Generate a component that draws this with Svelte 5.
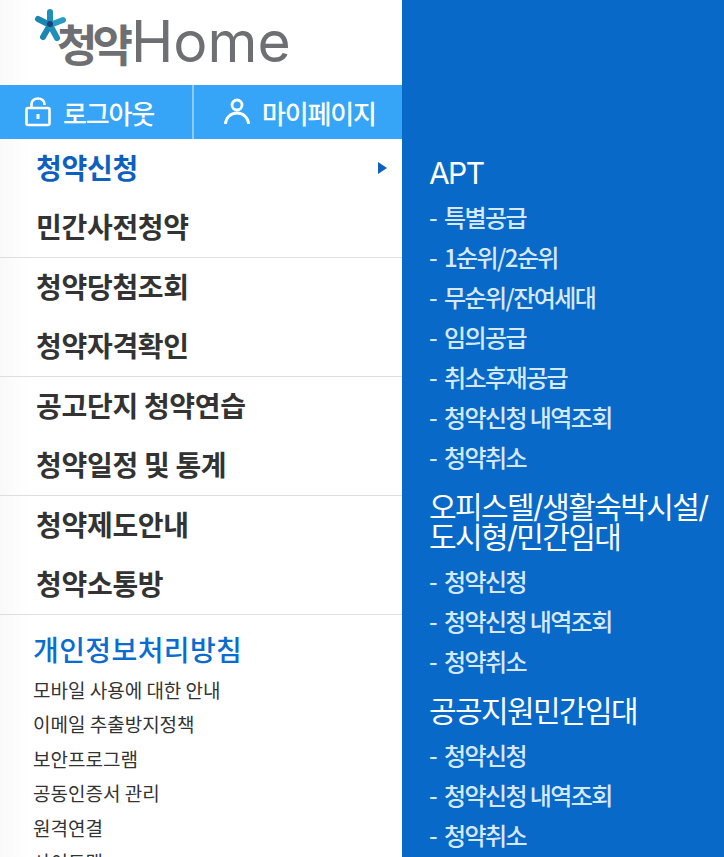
<script>
	const menuGroups = [
		[{ label: '청약신청', active: true }, { label: '민간사전청약' }],
		[{ label: '청약당첨조회' }, { label: '청약자격확인' }],
		[{ label: '공고단지 청약연습' }, { label: '청약일정 및 통계' }],
		[{ label: '청약제도안내' }, { label: '청약소통방' }]
	];

	const footerLinks = ['모바일 사용에 대한 안내', '이메일 추출방지정책', '보안프로그램', '공동인증서 관리', '원격연결', '사이트맵'];

	const subMenus = [
		{ title: ['APT'], items: ['특별공급', '1순위/2순위', '무순위/잔여세대', '임의공급', '취소후재공급', '청약신청 내역조회', '청약취소'] },
		{ title: ['오피스텔/생활숙박시설/', '도시형/민간임대'], items: ['청약신청', '청약신청 내역조회', '청약취소'] },
		{ title: ['공공지원민간임대'], items: ['청약신청', '청약신청 내역조회', '청약취소'] }
	];
</script>

<div class="page">
	<aside class="sidebar">
		<header class="logo">
			<span class="logo-ko">청약</span><span class="logo-en">Home</span>
			<svg class="star" viewBox="0 0 32 36" width="32" height="36" aria-hidden="true">
				<g fill="none" stroke-linecap="round" stroke-width="6">
					<path d="M16 17 L16 4" stroke="#1f8fb8" />
					<path d="M16 17 L4 11" stroke="#1b86b4" />
					<path d="M16 17 L29 12" stroke="#2a9cc4" />
					<path d="M16 17 L9 29" stroke="#1b86b4" />
					<path d="M16 17 L23 30" stroke="#1f8fb8" />
				</g>
				<circle cx="16" cy="16" r="3" fill="#1c3f7c" />
			</svg>
		</header>

		<div class="auth">
			<a class="auth-btn logout" href="#logout">
				<svg viewBox="0 0 26 30" width="26" height="30" fill="none" stroke="#fff" stroke-width="2.6" aria-hidden="true">
					<rect x="1.5" y="11" width="23" height="17" rx="1.5" />
					<path d="M6.5 11 V7 a6.5 5.5 0 0 1 13 0 V8" />
					<path d="M13 17 v5" stroke-width="3" />
				</svg>
				<span>로그아웃</span>
			</a>
			<a class="auth-btn mypage" href="#mypage">
				<svg viewBox="0 0 26 28" width="26" height="28" fill="none" stroke="#fff" stroke-width="2.8" aria-hidden="true">
					<circle cx="13" cy="7" r="5" />
					<path d="M1.5 26 a11.5 11 0 0 1 23 0" />
				</svg>
				<span>마이페이지</span>
			</a>
		</div>

		<nav>
			{#each menuGroups as group}
				<ul class="menu-group">
					{#each group as item}
						<li class="menu-item" class:active={item.active}>
							{item.label}
							{#if item.active}<span class="arrow"></span>{/if}
						</li>
					{/each}
				</ul>
			{/each}
		</nav>

		<div class="footer">
			<h2 class="privacy">개인정보처리방침</h2>
			<ul>
				{#each footerLinks as link}
					<li>{link}</li>
				{/each}
			</ul>
		</div>
	</aside>

	<section class="panel">
		{#each subMenus as sub}
			<h3 class="sub-title">
				{#each sub.title as line}
					<span>{line}</span>
				{/each}
			</h3>
			<ul class="sub-list">
				{#each sub.items as item}
					<li><span class="dash">-</span>{item}</li>
				{/each}
			</ul>
		{/each}
	</section>
</div>

<style>
	:global(body) {
		margin: 0;
		overflow: hidden;
	}

	.page {
		display: flex;
		width: 724px;
		height: 857px;
		overflow: hidden;
		font-family: "Noto Sans CJK KR", "Noto Sans", sans-serif;
	}

	ul {
		list-style: none;
		margin: 0;
		padding: 0;
	}

	.sidebar {
		width: 402px;
		flex-shrink: 0;
		background: linear-gradient(90deg, #f9f9f9, #fff 30px);
		color: #333;
	}

	.logo {
		position: relative;
		display: flex;
		align-items: baseline;
		height: 85px;
		padding-left: 57px;
		box-sizing: border-box;
		color: #6e6f73;
	}

	.star {
		position: absolute;
		left: 34px;
		top: 8px;
	}

	.logo-ko {
		font-size: 44px;
		font-weight: 700;
		line-height: 84px;
		letter-spacing: -5px;
	}

	.logo-en {
		margin-left: 3px;
		font-family: Inter, sans-serif;
		font-size: 57px;
		font-weight: 400;
		line-height: 84px;
	}

	.auth {
		display: flex;
		height: 54px;
		background: #36a5f7;
	}

	.auth-btn {
		display: flex;
		align-items: center;
		gap: 12px;
		color: #fff;
		font-size: 26px;
		font-weight: 500;
		letter-spacing: -1.2px;
		text-decoration: none;
	}

	.logout {
		flex: 0 0 194px;
		box-sizing: border-box;
		padding-left: 25px;
		border-right: 2px solid #8ccbf9;
	}

	.mypage {
		flex: 1;
		padding-left: 30px;
	}

	.menu-group {
		border-bottom: 1px solid #dedede;
	}

	.menu-item {
		position: relative;
		height: 59px;
		line-height: 57px;
		padding-left: 36px;
		font-size: 28px;
		font-weight: 700;
		letter-spacing: -0.3px;
	}

	.menu-item.active {
		color: #0d5fc0;
	}

	.arrow {
		position: absolute;
		right: 15px;
		top: 23px;
		border-left: 9px solid #0d5fc0;
		border-top: 6px solid transparent;
		border-bottom: 6px solid transparent;
	}

	.footer {
		padding: 15px 0 0 33px;
	}

	.privacy {
		margin: 0 0 5px;
		color: #0a6cd0;
		font-size: 28px;
		font-weight: 500;
		line-height: 38px;
		letter-spacing: 0.4px;
	}

	.footer li {
		height: 34.4px;
		line-height: 34px;
		font-size: 19px;
	}

	.panel {
		flex: 1;
		background: #0869c9;
		padding-top: 152px;
		padding-left: 27px;
		color: #fff;
	}

	.sub-title {
		margin: 0 0 9px;
		display: flex;
		flex-direction: column;
		font-family: Inter, "Noto Sans CJK KR", sans-serif;
		font-size: 30px;
		font-weight: 400;
		line-height: 30px;
		letter-spacing: -1.6px;
	}

	.sub-title:first-of-type {
		padding-top: 6px;
	}

	.sub-list {
		margin-bottom: 15px;
	}

	.sub-list li {
		height: 40px;
		line-height: 40px;
		color: #d6e8fb;
		font-size: 24px;
		font-weight: 500;
		letter-spacing: -1.6px;
		white-space: nowrap;
	}

	.dash {
		display: inline-block;
		width: 15px;
	}
</style>
